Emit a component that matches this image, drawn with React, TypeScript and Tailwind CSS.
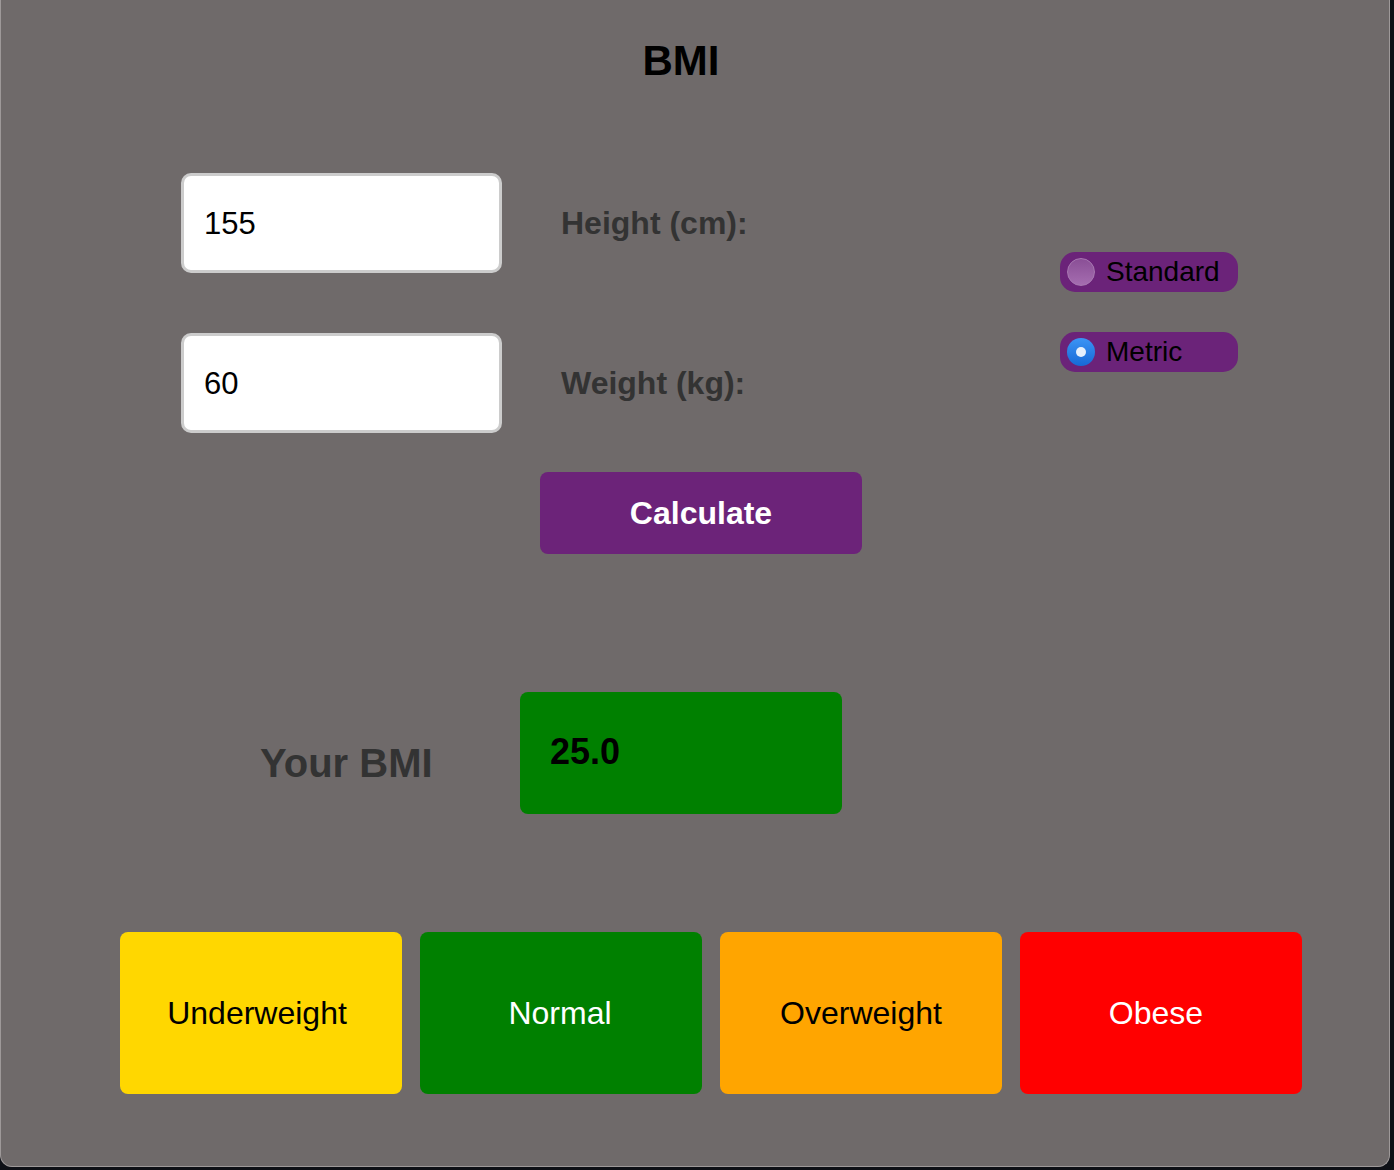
import React, { useState } from "react";

const categories = [
  { name: "Underweight", bg: "bg-[#ffd700]", fg: "text-black", shift: "pr-[8px]" },
  { name: "Normal", bg: "bg-[#008000]", fg: "text-white", shift: "pr-[2px]" },
  { name: "Overweight", bg: "bg-[#ffa500]", fg: "text-black", shift: "pr-0" },
  { name: "Obese", bg: "bg-[#ff0000]", fg: "text-white", shift: "pr-[10px]" },
];

const App = (): React.ReactElement => {
  const [height, setHeight] = useState<string>("155");
  const [weight, setWeight] = useState<string>("60");
  const [unit, setUnit] = useState<string>("metric");

  return (
    <div className="min-h-screen bg-[#0e1016] font-['Liberation_Sans',Arial,sans-serif]">
      <div className="w-[1390px] h-[1167px] bg-[#6f6a6a] border-x border-b border-[#9e9999] rounded-b-[12px] flex flex-col">
        <h1 className="w-[1360px] text-center text-[42px] leading-none font-bold text-black mt-[40px]">
          BMI
        </h1>

        <div className="flex pl-[180px] mt-[91px]">
          <div className="flex flex-col gap-[60px]">
            <InputRow label="Height (cm):" value={height} onChange={setHeight} />
            <InputRow label="Weight (kg):" value={weight} onChange={setWeight} />
          </div>
          <div className="flex flex-col gap-[40px] pt-[79px]">
            <UnitPill
              label="Standard"
              checked={unit == "standard"}
              onSelect={() => setUnit("standard")}
            />
            <UnitPill
              label="Metric"
              checked={unit == "metric"}
              onSelect={() => setUnit("metric")}
            />
          </div>
        </div>

        <button className="ml-[539px] mt-[39px] w-[322px] h-[82px] rounded-[8px] bg-[#6c2379] text-white text-[32px] font-bold">
          Calculate
        </button>

        <div className="flex items-center mt-[138px] pl-[259px]">
          <p className="w-[260px] mt-[20px] text-[40px] font-bold text-[#333333]">
            Your BMI
          </p>
          <div className="w-[322px] h-[122px] rounded-[8px] bg-[#008000] flex items-center pl-[30px] pb-[2px]">
            <span className="text-[36px] font-bold text-black">25.0</span>
          </div>
        </div>

        <div className="flex gap-[18px] pl-[119px] mt-[118px]">
          {categories.map((c) => (
            <div
              key={c.name}
              className={`w-[282px] h-[162px] rounded-[8px] flex items-center justify-center text-[32px] ${c.bg} ${c.fg} ${c.shift}`}
            >
              {c.name}
            </div>
          ))}
        </div>
      </div>
    </div>
  );
};

const InputRow = ({
  label,
  value,
  onChange,
}: {
  label: string;
  value: string;
  onChange: (v: string) => void;
}): React.ReactElement => {
  return (
    <div className="flex items-center">
      <input
        className="w-[321px] h-[100px] border-[3px] border-[#cccccc] rounded-[10px] bg-white px-[20px] pt-[2px] text-[31px] text-black focus:outline-none"
        value={value}
        onChange={(e) => onChange(e.target.value)}
      />
      <label className="w-[558px] pl-[59px] text-[32px] font-bold text-[#333333]">
        {label}
      </label>
    </div>
  );
};

const UnitPill = ({
  label,
  checked,
  onSelect,
}: {
  label: string;
  checked: boolean;
  onSelect: () => void;
}): React.ReactElement => {
  return (
    <div
      className="w-[178px] h-[40px] rounded-[15px] bg-[#6b2379] flex items-center pl-[7px] gap-[11px] cursor-pointer"
      onClick={onSelect}
    >
      {checked ? (
        <span className="w-[28px] h-[28px] rounded-full bg-gradient-to-b from-[#3b94f5] to-[#1669d6] flex items-center justify-center">
          <span className="w-[10px] h-[10px] rounded-full bg-[#e6f0fc]" />
        </span>
      ) : (
        <span className="w-[28px] h-[28px] rounded-full bg-gradient-to-b from-[#8a4f96] to-[#a56db0] border border-[#a878b2]" />
      )}
      <span className="text-[28px] text-black leading-none">{label}</span>
    </div>
  );
};

export default App;
